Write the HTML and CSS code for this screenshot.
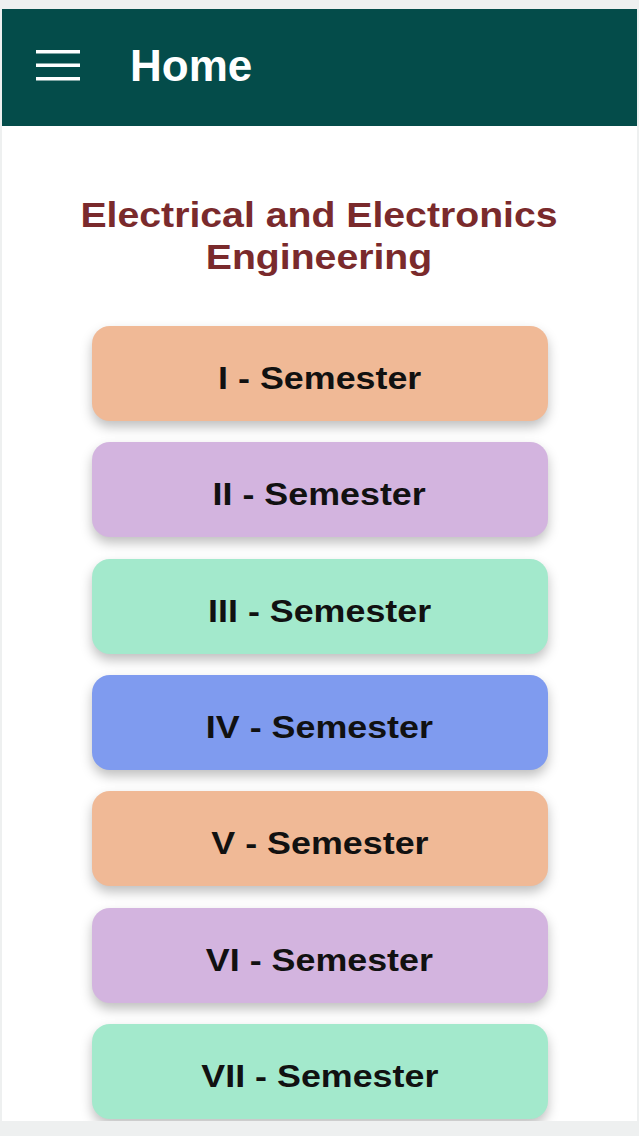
FILE: index.html
```html
<!DOCTYPE html>
<html>
<head>
<meta charset="utf-8">
<link rel="stylesheet" href="styles.css">
</head>
<body>
<div class="app">
  <header class="topbar">
    <svg class="menu" width="44" height="32" viewBox="0 0 44 32">
      <rect x="0" y="0" width="44" height="3.5" fill="#fff"/>
      <rect x="0" y="13.5" width="44" height="3.5" fill="#fff"/>
      <rect x="0" y="27" width="44" height="3.5" fill="#fff"/>
    </svg>
    <h1 class="topbar-title">Home</h1>
  </header>
  <main class="content">
    <h2 class="dept"><span class="wide">Electrical and Electronics<br>Engineering</span></h2>
    <div class="list">
      <div class="sem orange"><span class="wide">I - Semester</span></div>
      <div class="sem purple"><span class="wide">II - Semester</span></div>
      <div class="sem green"><span class="wide">III - Semester</span></div>
      <div class="sem blue"><span class="wide">IV - Semester</span></div>
      <div class="sem orange"><span class="wide">V - Semester</span></div>
      <div class="sem purple"><span class="wide">VI - Semester</span></div>
      <div class="sem green"><span class="wide">VII - Semester</span></div>
    </div>
  </main>
</div>
</body>
</html>
```
FILE: styles.css
```css
html, body {
  margin: 0;
  padding: 0;
  background: #eef0f0;
  font-family: "Liberation Sans", Arial, sans-serif;
}
.app {
  margin: 9px 2px 0 2px;
  height: 1112px;
  background: #fff;
  overflow: hidden;
  display: flex;
  flex-direction: column;
}
.topbar {
  height: 117px;
  flex: none;
  background: #044c4a;
  display: flex;
  align-items: center;
  padding-left: 34px;
  padding-bottom: 4px;
  box-sizing: border-box;
}
.menu {
  display: block;
}
.topbar-title {
  margin: 0 0 0 50px;
  color: #fff;
  font-size: 44px;
  line-height: 1;
  font-weight: bold;
}
.content {
  display: flex;
  flex-direction: column;
  align-items: center;
}
.wide {
  display: inline-block;
  transform: scaleX(1.12);
}
.dept {
  margin: 68px 0 0 0;
  text-align: center;
  color: #7a2a2c;
  font-size: 35px;
  line-height: 42px;
  font-weight: bold;
}
.list {
  margin-top: 48px;
  display: flex;
  flex-direction: column;
  gap: 21.33px;
  width: 456px;
}
.sem {
  height: 95px;
  border-radius: 18px;
  display: flex;
  align-items: center;
  justify-content: center;
  padding-top: 10px;
  box-sizing: border-box;
  font-size: 32px;
  font-weight: bold;
  color: #111;
  box-shadow: 0 6px 12px rgba(0,0,0,0.25);
}
.orange { background: #f0b996; }
.purple { background: #d3b4df; }
.green { background: #a3e9cc; }
.blue { background: #7f9bef; }
```
